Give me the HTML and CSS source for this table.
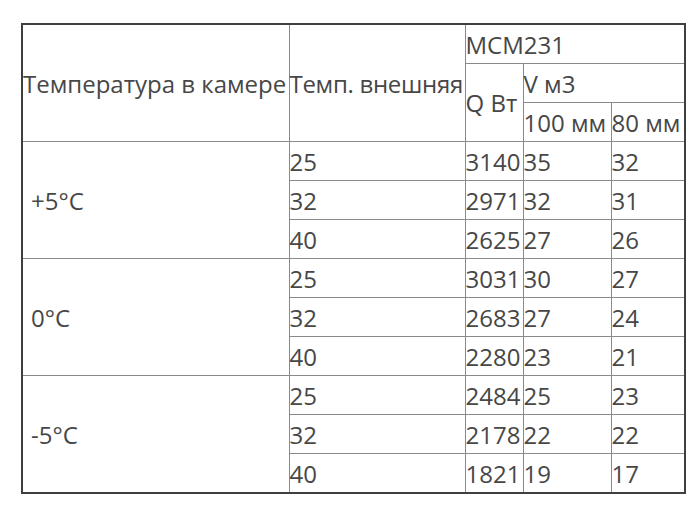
FILE: index.html
```html
<!DOCTYPE html>
<html>
<head>
<meta charset="utf-8">
<link rel="stylesheet" href="styles.css">
</head>
<body>
<table class="tbl">
  <colgroup>
    <col class="c1"><col class="c2"><col class="c3"><col class="c4"><col class="c5">
  </colgroup>
  <tr class="hrow">
    <td rowspan="3">Температура в камере</td>
    <td rowspan="3" class="tight">Темп. внешняя</td>
    <td colspan="3">MCM231</td>
  </tr>
  <tr class="hrow">
    <td rowspan="2">Q Вт</td>
    <td colspan="2">V м3</td>
  </tr>
  <tr class="hrow">
    <td>100 мм</td>
    <td>80 мм</td>
  </tr>
  <tr><td rowspan="3" class="grp">+5°C</td><td>25</td><td>3140</td><td>35</td><td>32</td></tr>
  <tr><td>32</td><td>2971</td><td>32</td><td>31</td></tr>
  <tr><td>40</td><td>2625</td><td>27</td><td>26</td></tr>
  <tr><td rowspan="3" class="grp">0°C</td><td>25</td><td>3031</td><td>30</td><td>27</td></tr>
  <tr><td>32</td><td>2683</td><td>27</td><td>24</td></tr>
  <tr><td>40</td><td>2280</td><td>23</td><td>21</td></tr>
  <tr><td rowspan="3" class="grp">-5°C</td><td>25</td><td>2484</td><td>25</td><td>23</td></tr>
  <tr><td>32</td><td>2178</td><td>22</td><td>22</td></tr>
  <tr><td>40</td><td>1821</td><td>19</td><td>17</td></tr>
</table>
</body>
</html>
```
FILE: styles.css
```css
html, body {
  margin: 0;
  padding: 0;
  background: #fff;
}
body {
  padding: 23px 0 0 21px;
  font-family: "Open Sans", "Noto Sans", sans-serif;
  font-size: 24px;
  color: #474747;
}
.tbl {
  border-collapse: collapse;
  table-layout: fixed;
  width: 663px;
  border: 2px solid #3f3f3f;
}
.c1 { width: 267px; }
.c2 { width: 176px; }
.c3 { width: 58px; }
.c4 { width: 88px; }
.c5 { width: 74px; }
.tbl td {
  border: 1px solid #8a8a8a;
  padding: 0;
  height: 38px;
  vertical-align: middle;
  white-space: nowrap;
  line-height: 27px;
}
.tbl td.tight {
  letter-spacing: -0.3px;
}
.tbl td.grp {
  padding-left: 8px;
}
```
